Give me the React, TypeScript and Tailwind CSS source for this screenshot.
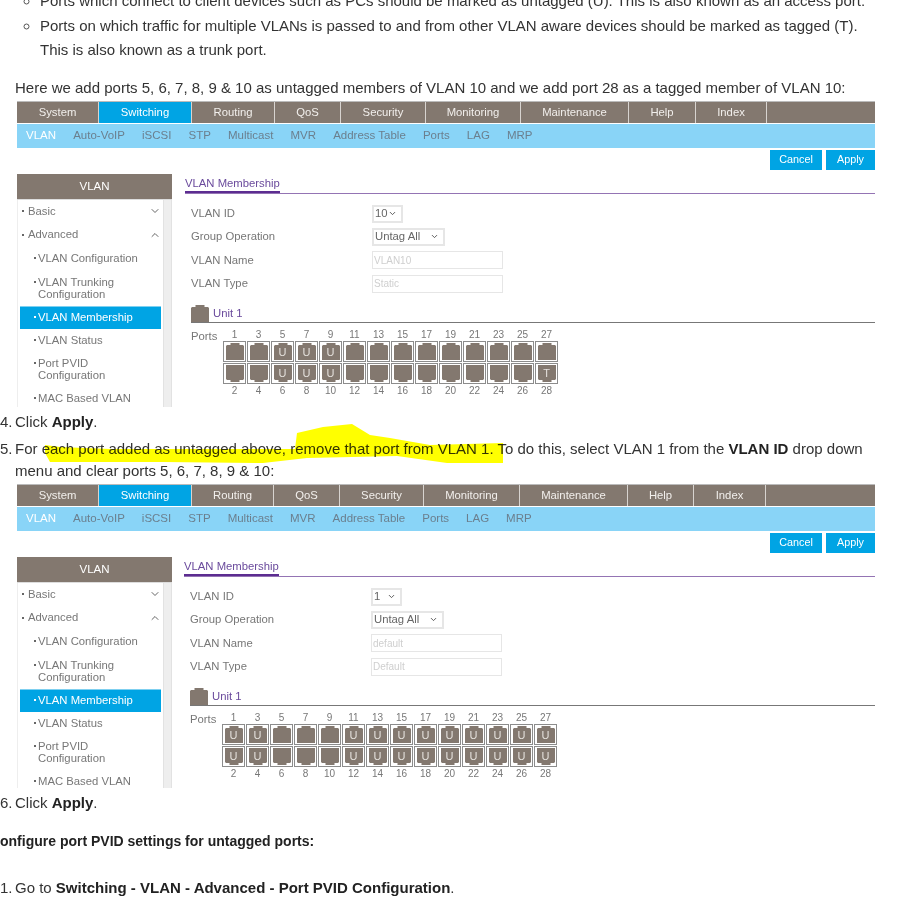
import { ChevronDown, ChevronUp } from "lucide-react";
import type { ReactNode } from "react";

const tabNames = ["System", "Switching", "Routing", "QoS", "Security", "Monitoring", "Maintenance", "Help", "Index", ""];
const subNames = ["VLAN", "Auto-VoIP", "iSCSI", "STP", "Multicast", "MVR", "Address Table", "Ports", "LAG", "MRP"];

function PortGlyph({ flip }: { flip: boolean }) {
  return (
    <svg viewBox="0 0 18 17" className={flip ? "w-[18px] h-[17px] rotate-180" : "w-[18px] h-[17px]"} fill="#83786f">
      <path d="M4.5 0H13.5V2H17L18 3V17H0V3L1 2H4.5Z" />
    </svg>
  );
}

function Port({ flip, label }: { flip: boolean; label: string }) {
  return (
    <div className="relative w-[23px] h-[21px] border border-[#8c8c8c] bg-white flex items-center justify-center">
      <PortGlyph flip={flip} />
      <span className={flip ? "absolute inset-0 flex items-center justify-center text-[11px] text-[#e4e0dc] pb-[1px]" : "absolute inset-0 flex items-center justify-center text-[11px] text-[#e4e0dc] pt-[2px]"}>{label}</span>
    </div>
  );
}

function PortGrid({ labelFor }: { labelFor: (n: number) => string }) {
  const odd = Array.from({ length: 14 }, (_, i) => i * 2 + 1);
  const even = Array.from({ length: 14 }, (_, i) => i * 2 + 2);
  return (
    <div className="grid grid-cols-[repeat(14,24px)]">
      {odd.map((n) => (
        <div key={n} className="h-[13px] leading-[13px] text-center text-[10px] text-[#777] pr-[1px]">{n}</div>
      ))}
      <div className="col-span-14 grid grid-cols-[repeat(14,24px)] gap-y-[1px]">
        {odd.map((n) => <Port key={n} flip={false} label={labelFor(n)} />)}
        {even.map((n) => <Port key={n} flip={true} label={labelFor(n)} />)}
      </div>
      {even.map((n) => (
        <div key={n} className="h-[13px] leading-[13px] text-center text-[10px] text-[#777] pr-[1px]">{n}</div>
      ))}
    </div>
  );
}

function Dot({ top }: { top?: boolean }) {
  return <span className={(top ? "mt-[5px] " : "") + "inline-block w-[2px] h-[2px] bg-[#666] shrink-0 mr-[2px]"} />;
}

function Sidebar() {
  const sub = "flex pl-[14px] pr-[4px] text-[11.3px] leading-[12.5px] text-[#777]";
  return (
    <div className="w-[155px] shrink-0">
      <div className="h-[26px] pt-[2px] bg-[#83786f] text-white text-[11.5px] flex items-center justify-center border-b border-[#ddd]">VLAN</div>
      <div className="flex border-l border-[#eee] h-[220px]">
        <div className="w-[145px] shrink-0 pl-[2px]">
          <div className="h-[23px] flex items-center justify-between pl-[2px] pr-[2px] text-[11.3px] text-[#777]">
            <span className="flex items-center"><span className="w-[2px] h-[2px] bg-[#666] mr-[4px]" />Basic</span>
            <ChevronDown className="w-[12px] h-[12px] text-[#666]" strokeWidth={2} />
          </div>
          <div className="h-[24px] flex items-center justify-between pl-[2px] pr-[2px] text-[11.3px] text-[#777]">
            <span className="flex items-center"><span className="w-[2px] h-[2px] bg-[#666] mr-[4px]" />Advanced</span>
            <ChevronUp className="w-[12px] h-[12px] text-[#666]" strokeWidth={2} />
          </div>
          <div className={sub + " h-[23px] items-center"}><Dot />VLAN Configuration</div>
          <div className={sub + " h-[36px] pt-[6px]"}><Dot top /><span>VLAN Trunking<br />Configuration</span></div>
          <div className="h-[23px] bg-[#00a4e4] border-t border-[#7fd0f0] flex items-center pl-[14px] text-[11.3px] text-white mr-[2px] pb-[1px]"><span className="w-[2px] h-[2px] bg-white mr-[2px]" />VLAN Membership</div>
          <div className={sub + " h-[23px] items-center"}><Dot />VLAN Status</div>
          <div className={sub + " h-[35px] pt-[5px]"}><Dot top /><span>Port PVID<br />Configuration</span></div>
          <div className={sub + " h-[23px] items-center"}><Dot />MAC Based VLAN</div>
        </div>
        <div className="w-[9px] shrink-0 bg-[#eeeeee] border-x border-[#e2e2e2]" />
      </div>
    </div>
  );
}

function Select({ value, width }: { value: string; width: string }) {
  return (
    <div className={width + " h-[18px] border-2 border-[#e6e6e6] flex items-center justify-between pl-[1px] pr-[4px] text-[11.3px] text-[#666]"}>
      <span>{value}</span>
      <ChevronDown className="w-[9px] h-[9px] text-[#555]" strokeWidth={2.5} />
    </div>
  );
}

function FormRow({ label, children }: { label: string; children: ReactNode }) {
  return (
    <div className="flex items-center h-[23.3px]">
      <div className="w-[181px] shrink-0 text-[11.3px] text-[#777]">{label}</div>
      {children}
    </div>
  );
}

function Panel({
  height, widths, gap, vlanId, group, name, type, labelFor, narrow,
}: {
  height: string; widths: number[]; gap: string; vlanId: string; group: string; name: string; type: string;
  labelFor: (n: number) => string; narrow: string;
}) {
  return (
    <div className={height + " ml-[17px] w-[858px] overflow-hidden text-[11.3px]"}>
      <div className="flex h-[23px] border-t border-[#bbb] border-b border-b-white bg-[#83786f]">
        {tabNames.map((t, i) => (
          <div
            key={i}
            style={{ width: widths[i] }}
            className={(i === 1 ? "bg-[#00a4e4] text-white " : "text-[#f2efec] ") + (i < 9 ? "border-r border-[#d8d4d0] " : "") + "shrink-0 flex items-center justify-center"}
          >
            {t}
          </div>
        ))}
      </div>
      <div className={gap + " flex h-[24px] items-center bg-[#89d4f7] pl-[9px] text-[11.5px] text-[#6b7f8e]"}>
        {subNames.map((s, i) => (
          <span key={s} className={i === 0 ? "text-white" : ""}>{s}</span>
        ))}
      </div>
      <div className="flex justify-end gap-[4px] pt-[2px] h-[26px] text-[10.8px]">
        <div className="w-[52px] h-[20px] bg-[#00a4e4] text-white flex items-center justify-center">Cancel</div>
        <div className="w-[49px] h-[20px] bg-[#00a4e4] text-white flex items-center justify-center">Apply</div>
      </div>
      <div className="flex">
        <Sidebar />
        <div className={narrow + " flex-1 min-w-0"}>
          <div className="h-[20px] border-b border-[#9474b4] flex">
            <div className="border-b-2 border-[#5c2d91] h-[20px] text-[#6a4a9c] leading-[20px] -mt-[1px]">VLAN Membership</div>
          </div>
          <div className="pl-[6px] pt-[8.5px]">
            <FormRow label="VLAN ID"><Select value={vlanId} width="w-[31px]" /></FormRow>
            <FormRow label="Group Operation"><Select value={group} width="w-[73px]" /></FormRow>
            <FormRow label="VLAN Name">
              <div className="w-[131px] h-[18px] border border-[#e6e6e6] text-[10px] text-[#cfcfcf] flex items-center pl-[1px]">{name}</div>
            </FormRow>
            <FormRow label="VLAN Type">
              <div className="w-[131px] h-[18px] border border-[#e6e6e6] text-[10px] text-[#cfcfcf] flex items-center pl-[1px]">{type}</div>
            </FormRow>
            <div className="flex items-center h-[18px] mt-[9px] border-b border-[#777] box-content">
              <svg viewBox="0 0 18 17" className="w-[18px] h-[17px]" fill="#83786f"><path d="M4.5 0H13.5V2H17L18 3V17H0V3L1 2H4.5Z" /></svg>
              <span className="ml-[4px] text-[#6a4a9c]">Unit 1</span>
            </div>
            <div className="flex pt-[5px]">
              <div className="w-[32px] shrink-0 text-[#777] leading-[16px]">Ports</div>
              <PortGrid labelFor={labelFor} />
            </div>
          </div>
        </div>
      </div>
    </div>
  );
}

const tabs1 = [82, 93, 83, 66, 85, 95, 108, 67, 71, 108];
const tabs2 = [82, 93, 82, 66, 84, 96, 108, 66, 72, 109];

export default function App() {
  const body = "flex text-[15px] text-[#333]";
  const num = "w-[15px] shrink-0 pr-[3px] text-right whitespace-nowrap";
  return (
    <div className="relative w-[914px] h-[907px] overflow-hidden bg-white [font-family:'Liberation_Sans',Arial,sans-serif]">
      <ul className="-mt-[11px] pl-[40px] pr-[40px] text-[15px] leading-[24.5px] text-[#333] list-[circle] marker:text-[#555]">
        <li>Ports which connect to client devices such as PCs should be marked as untagged (U). This is also known as an access port.</li>
        <li>Ports on which traffic for multiple VLANs is passed to and from other VLAN aware devices should be marked as tagged (T). This is also known as a trunk port.</li>
      </ul>
      <p className="pl-[15px] mt-[13px] text-[15px] leading-[24px] text-[#333]">Here we add ports 5, 6, 7, 8, 9 &amp; 10 as untagged members of VLAN 10 and we add port 28 as a tagged member of VLAN 10:</p>
      <div className="mt-[1px]">
        <Panel height="h-[306px]" widths={tabs1} gap="gap-[17.1px]" vlanId="10" group="Untag All" name="VLAN10" type="Static" narrow="ml-[13px]"
          labelFor={(n) => (n >= 5 && n <= 10 ? "U" : n === 28 ? "T" : "")} />
      </div>
      <div className={body + " mt-[3px] leading-[24px]"}>
        <span className={num}>4.</span><span>Click <b className="text-[#222]">Apply</b>.</span>
      </div>
      <div className={body + " mt-[4px] leading-[22px]"}>
        <span className={num}>5.</span>
        <span className="pr-[40px]">For each port added as untagged above, remove that port from VLAN 1. To do this, select VLAN 1 from the <b className="text-[#222]">VLAN ID</b> drop down menu and clear ports 5, 6, 7, 8, 9 &amp; 10:</span>
      </div>
      <div className="mt-[2px]">
        <Panel height="h-[304px]" widths={tabs2} gap="gap-[17px]" vlanId="1" group="Untag All" name="default" type="Default" narrow="ml-[12px]"
          labelFor={(n) => (n >= 5 && n <= 10 ? "" : "U")} />
      </div>
      <div className={body + " mt-[3px] leading-[24px]"}>
        <span className={num}>6.</span><span>Click <b className="text-[#222]">Apply</b>.</span>
      </div>
      <p className="mt-[14px] text-[14px] leading-[24px] font-bold text-[#222]">onfigure port PVID settings for untagged ports:</p>
      <div className="mt-[23px] leading-[24px] flex text-[15px] text-[#333]">
        <span className={num}>1.</span><span>Go to <b className="text-[#222]">Switching - VLAN - Advanced - Port PVID Configuration</b>.</span>
      </div>
      <svg className="absolute left-0 top-0 w-[914px] h-[907px] mix-blend-multiply pointer-events-none" viewBox="0 0 914 907">
        <path fill="#ffff00" d="M45 445 L60 447 L110 449 L295 449 L297 433 L323 427 L352 424 L370 435 L390 438 L430 445 L503 443 L503 463 L447 463 L397 456 L307 458 L263 463 L163 462 L50 462 L45 453 Z" />
      </svg>
    </div>
  );
}
